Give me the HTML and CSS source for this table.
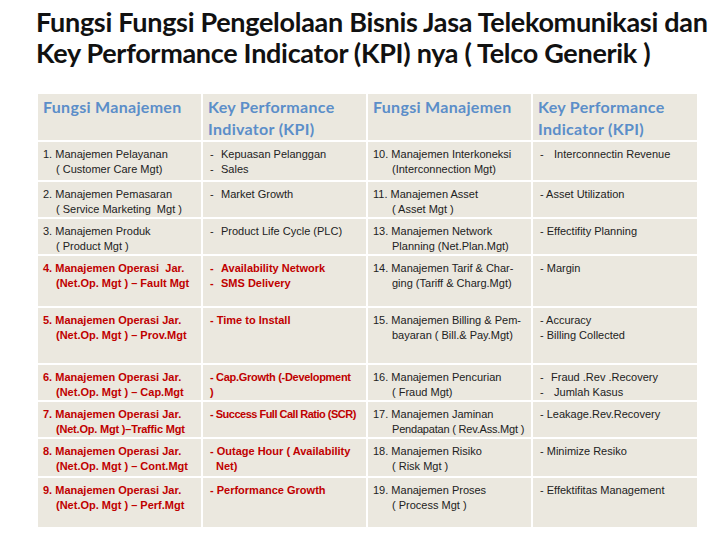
FILE: index.html
```html
<!DOCTYPE html>
<html>
<head>
<meta charset="utf-8">
<link rel="stylesheet" href="styles.css">
</head>
<body>
<h1 class="title">Fungsi Fungsi Pengelolaan Bisnis Jasa Telekomunikasi dan<br>Key Performance Indicator (KPI) nya ( Telco Generik )</h1>
<table class="kpi">
  <colgroup><col class="c1"><col class="c2"><col class="c3"><col class="c4"></colgroup>
  <thead>
    <tr class="r0">
      <th>Fungsi Manajemen</th>
      <th>Key Performance Indivator (KPI)</th>
      <th>Fungsi Manajemen</th>
      <th>Key Performance Indicator (KPI)</th>
    </tr>
  </thead>
  <tbody>
    <tr class="r1">
      <td><div>1. Manajemen Pelayanan</div><div class="in">( Customer Care Mgt)</div></td>
      <td><div class="li">Kepuasan Pelanggan</div><div class="li">Sales</div></td>
      <td><div>10. Manajemen Interkoneksi</div><div class="in2">(Interconnection Mgt)</div></td>
      <td><div class="li">&nbsp;Interconnectin Revenue</div></td>
    </tr>
    <tr class="r2">
      <td><div>2. Manajemen Pemasaran</div><div class="in">( Service Marketing&nbsp; Mgt )</div></td>
      <td><div class="li">Market Growth</div></td>
      <td><div>11. Manajemen Asset</div><div class="in2">( Asset Mgt )</div></td>
      <td><div class="d">- Asset Utilization</div></td>
    </tr>
    <tr class="r3">
      <td><div>3. Manajemen Produk</div><div class="in">( Product Mgt )</div></td>
      <td><div class="li">Product Life Cycle (PLC)</div></td>
      <td><div>13. Manajemen Network</div><div class="in2">Planning (Net.Plan.Mgt)</div></td>
      <td><div class="d">- Effectifity Planning</div></td>
    </tr>
    <tr class="r4 red">
      <td><div>4. Manajemen Operasi&nbsp; Jar.</div><div class="in">(Net.Op. Mgt ) – Fault Mgt</div></td>
      <td><div class="li">Availability Network</div><div class="li">SMS Delivery</div></td>
      <td class="blk"><div>14. Manajemen Tarif &amp; Char-</div><div class="in2">ging (Tariff &amp; Charg.Mgt)</div></td>
      <td class="blk"><div class="d">- Margin</div></td>
    </tr>
    <tr class="r5 red">
      <td><div>5. Manajemen Operasi Jar.</div><div class="in">(Net.Op. Mgt ) – Prov.Mgt</div></td>
      <td><div class="d">- Time to Install</div></td>
      <td class="blk"><div>15. Manajemen Billing &amp; Pem-</div><div class="in2">bayaran ( Bill.&amp; Pay.Mgt)</div></td>
      <td class="blk"><div class="d">- Accuracy</div><div class="d">- Billing Collected</div></td>
    </tr>
    <tr class="r6 red">
      <td><div>6. Manajemen Operasi Jar.</div><div class="in">(Net.Op. Mgt ) – Cap.Mgt</div></td>
      <td><div class="d tight3">- Cap.Growth (-Development</div><div class="d">)</div></td>
      <td class="blk"><div>16. Manajemen Pencurian</div><div class="in2">( Fraud Mgt)</div></td>
      <td class="blk"><div class="li">Fraud .Rev .Recovery</div><div class="li">&nbsp;Jumlah Kasus</div></td>
    </tr>
    <tr class="r7 red">
      <td><div>7. Manajemen Operasi Jar.</div><div class="in tight2">(Net.Op. Mgt )–Traffic Mgt</div></td>
      <td><div class="d tight">- Success Full Call Ratio (SCR)</div></td>
      <td class="blk"><div>17. Manajemen Jaminan</div><div class="in2 tight2">Pendapatan ( Rev.Ass.Mgt )</div></td>
      <td class="blk"><div class="d">- Leakage.Rev.Recovery</div></td>
    </tr>
    <tr class="r8 red">
      <td><div>8. Manajemen Operasi Jar.</div><div class="in">(Net.Op. Mgt ) – Cont.Mgt</div></td>
      <td><div class="d">- Outage Hour ( Availability</div><div class="in3">Net)</div></td>
      <td class="blk"><div>18. Manajemen Risiko</div><div class="in2">( Risk Mgt )</div></td>
      <td class="blk"><div class="d">- Minimize Resiko</div></td>
    </tr>
    <tr class="r9 red">
      <td><div>9. Manajemen Operasi Jar.</div><div class="in">(Net.Op. Mgt ) – Perf.Mgt</div></td>
      <td><div class="d">- Performance Growth</div></td>
      <td class="blk"><div>19. Manajemen Proses</div><div class="in2">( Process Mgt )</div></td>
      <td class="blk"><div class="d">- Effektifitas Management</div></td>
    </tr>
  </tbody>
</table>
</body>
</html>
```
FILE: styles.css
```css
html, body {
  margin: 0;
  padding: 0;
  background: #ffffff;
}
body {
  width: 720px;
  height: 540px;
  overflow: hidden;
  font-family: "Liberation Sans", Arial, sans-serif;
}
.title {
  margin: 0;
  padding: 6px 0 0 36px;
  font-family: Lato, "Liberation Sans", sans-serif;
  font-weight: 700;
  font-size: 27px;
  line-height: 31px;
  letter-spacing: -0.3px;
  color: #111111;
  height: 92px;
  box-sizing: border-box;
  white-space: nowrap;
}
.kpi {
  margin-left: 36px;
  border-collapse: collapse;
  table-layout: fixed;
  width: 661px;
}
.c1 { width: 165px; }
.c2 { width: 165px; }
.c3 { width: 165px; }
.c4 { width: 166px; }
.kpi th, .kpi td {
  background: #ebe8df;
  border: 2px solid #ffffff;
  vertical-align: top;
  text-align: left;
  padding: 5px 2px 0 5px;
  font-size: 11px;
  line-height: 15px;
  color: #222222;
  white-space: nowrap;
  overflow: hidden;
}
.kpi th {
  font-family: Lato, "Liberation Sans", sans-serif;
  font-weight: 700;
  font-size: 16px;
  line-height: 22px;
  color: #5b8ec9;
  letter-spacing: 0.3px;
  padding-top: 2px;
  white-space: normal;
}
.r0 { height: 47px; }
.r1 { height: 40px; }
.r2 { height: 37px; }
.r3 { height: 36px; }
.r4 { height: 52px; }
.r5 { height: 57px; }
.r6 { height: 37px; }
.r7 { height: 36px; }
.r8 { height: 39px; }
.r9 { height: 51px; }
.red td {
  color: #c00000;
  font-weight: 700;
}
.red td.blk {
  color: #222222;
  font-weight: 400;
}
.tight { letter-spacing: -0.5px; }
.tight2 { letter-spacing: -0.2px; }
.tight3 { letter-spacing: -0.3px; }
.in { padding-left: 13px; }
.in2 { padding-left: 19px; }
.in3 { padding-left: 8px; }
.li { position: relative; padding-left: 13px; }
.li::before {
  content: "-";
  position: absolute;
  left: 2px;
  top: 0;
}
.d { padding-left: 2px; }
```
